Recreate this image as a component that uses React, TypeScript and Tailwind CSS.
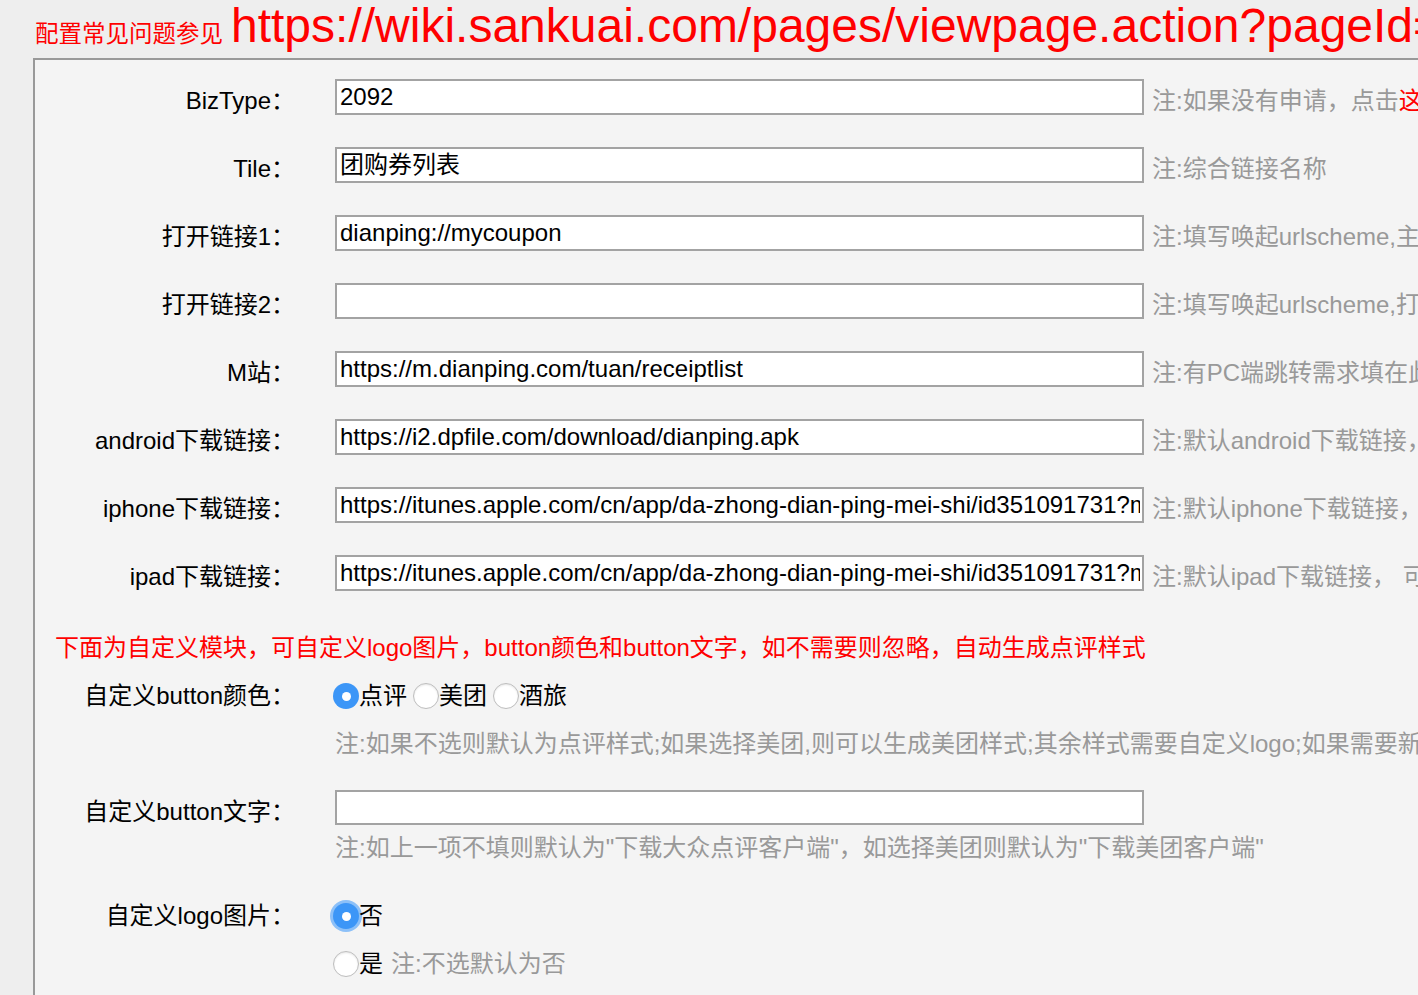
import { useState } from 'react';

const font = { fontFamily: '"Liberation Sans", "Noto Sans CJK SC", sans-serif' };

interface Row {
  label: string;
  value: string;
  note: React.ReactNode;
}

const rows: Row[] = [
  {
    label: 'BizType：',
    value: '2092',
    note: (
      <>
        注:如果没有申请，点击<span className="text-[#ff0000]">这里申请</span>
      </>
    ),
  },
  { label: 'Tile：', value: '团购券列表', note: '注:综合链接名称' },
  { label: '打开链接1：', value: 'dianping://mycoupon', note: '注:填写唤起urlscheme,主链接必填' },
  { label: '打开链接2：', value: '', note: '注:填写唤起urlscheme,打开链接1失败时使用' },
  { label: 'M站：', value: 'https://m.dianping.com/tuan/receiptlist', note: '注:有PC端跳转需求填在此处' },
  { label: 'android下载链接：', value: 'https://i2.dpfile.com/download/dianping.apk', note: '注:默认android下载链接，可修改' },
  {
    label: 'iphone下载链接：',
    value: 'https://itunes.apple.com/cn/app/da-zhong-dian-ping-mei-shi/id351091731?mt=8',
    note: '注:默认iphone下载链接，可修改',
  },
  {
    label: 'ipad下载链接：',
    value: 'https://itunes.apple.com/cn/app/da-zhong-dian-ping-mei-shi/id351091731?mt=8',
    note: '注:默认ipad下载链接， 可修改',
  },
];

function Radio({ checked, focused, onClick }: { checked: boolean; focused?: boolean; onClick: () => void }) {
  if (checked) {
    return (
      <span
        onClick={onClick}
        className={
          'flex items-center justify-center w-[26px] h-[26px] rounded-full bg-[#3c96f7] shrink-0 cursor-pointer ' +
          (focused ? 'ring-[3px] ring-[#8cc0f8]' : '')
        }
      >
        <span className="w-[9px] h-[9px] rounded-full bg-white" />
      </span>
    );
  }
  return (
    <span
      onClick={onClick}
      className="w-[26px] h-[26px] rounded-full bg-white border border-[#bdbdbd] shadow-[inset_0_1px_2px_rgba(0,0,0,0.1)] shrink-0 cursor-pointer"
    />
  );
}

export default function App() {
  const [color, setColor] = useState('dp');
  const [logo, setLogo] = useState('no');

  const colors = [
    { key: 'dp', text: '点评' },
    { key: 'mt', text: '美团' },
    { key: 'jl', text: '酒旅' },
  ];

  return (
    <div className="w-full h-[995px] overflow-hidden bg-[#eeeeee] text-[24px] text-black" style={font}>
      <div className="h-[58px] pt-[2px] pl-[35px] flex items-baseline whitespace-nowrap text-[#ff0000]">
        <span className="text-[23.5px] leading-[48px]">配置常见问题参见</span>
        <span className="ml-[8px] text-[48px] leading-[48px]">
          https://wiki.sankuai.com/pages/viewpage.action?pageId=123456789
        </span>
      </div>

      <div className="ml-[33px] h-full border-l-2 border-t-2 border-[#999999] bg-[#f4f4f4] pt-[3px]">
        {rows.map((r) => (
          <div key={r.label} className="h-[68px] flex items-center whitespace-nowrap">
            <div className="w-[260px] shrink-0 text-right mt-[8px]">{r.label}</div>
            <input
              defaultValue={r.value}
              className="ml-[40px] w-[809px] h-[36px] shrink-0 border-2 border-[#a3a3a3] bg-white pl-[3px] pr-[2px] outline-none text-[24px] text-black"
              style={font}
            />
            <div className="ml-[8px] mt-[8px] text-[#999999]">{r.note}</div>
          </div>
        ))}

        <div className="mt-[17px] h-[48px] flex items-center pl-[20px] whitespace-nowrap text-[#ff0000]">
          下面为自定义模块，可自定义logo图片，button颜色和button文字，如不需要则忽略，自动生成点评样式
        </div>

        <div className="h-[48px] flex items-center whitespace-nowrap">
          <div className="w-[260px] shrink-0 text-right">自定义button颜色：</div>
          <div className="ml-[38px] flex items-center">
            {colors.map((c, i) => (
              <label key={c.key} className={'flex items-center ' + (i > 0 ? 'ml-[6px]' : '')}>
                <Radio checked={color === c.key} onClick={() => setColor(c.key)} />
                <span>{c.text}</span>
              </label>
            ))}
          </div>
        </div>

        <div className="h-[48px] flex items-center pl-[300px] whitespace-nowrap text-[#999999]">
          注:如果不选则默认为点评样式;如果选择美团,则可以生成美团样式;其余样式需要自定义logo;如果需要新的样式请联系开发
        </div>

        <div className="mt-[20px] h-[44px] flex items-start whitespace-nowrap">
          <div className="w-[260px] h-[48px] shrink-0 flex items-center justify-end">自定义button文字：</div>
          <input
            defaultValue=""
            className="ml-[40px] mt-[2px] w-[809px] h-[35px] shrink-0 border-2 border-[#a3a3a3] bg-white pl-[3px] outline-none"
            style={font}
          />
        </div>

        <div className="h-[32px] flex items-center pl-[300px] whitespace-nowrap text-[#999999]">
          注:如上一项不填则默认为"下载大众点评客户端"，如选择美团则默认为"下载美团客户端"
        </div>

        <div className="mt-[28px] h-[48px] flex items-center whitespace-nowrap">
          <div className="w-[260px] shrink-0 text-right">自定义logo图片：</div>
          <label className="ml-[38px] flex items-center">
            <Radio checked={logo === 'no'} focused onClick={() => setLogo('no')} />
            <span>否</span>
          </label>
        </div>

        <div className="h-[48px] flex items-center pl-[298px] whitespace-nowrap">
          <label className="flex items-center">
            <Radio checked={logo === 'yes'} focused onClick={() => setLogo('yes')} />
            <span>是</span>
          </label>
          <span className="ml-[8px] text-[#999999]">注:不选默认为否</span>
        </div>
      </div>
    </div>
  );
}
